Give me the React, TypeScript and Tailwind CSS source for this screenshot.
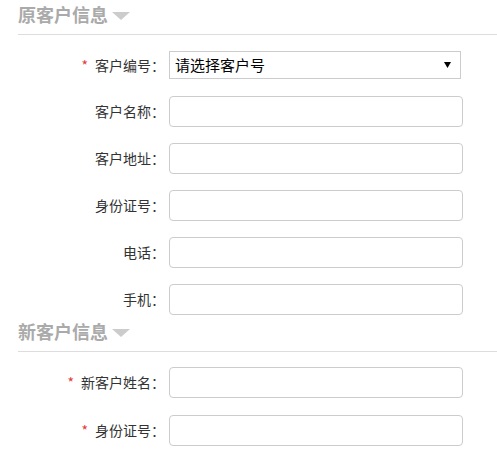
import React from 'react';

type Field = {
  label: string;
  required?: boolean;
};

const oldFields: Field[] = [
  { label: '客户名称：' },
  { label: '客户地址：' },
  { label: '身份证号：' },
  { label: '电话：' },
  { label: '手机：' },
];

const newFields: Field[] = [
  { label: '新客户姓名：', required: true },
  { label: '身份证号：', required: true },
];

const SectionTitle: React.FC<{ title: string; className?: string }> = ({ title, className = '' }) => (
  <div className={`h-[35px] border-b border-[#dddddd] ${className}`}>
    <div className="flex items-center pt-[3px]">
      <span className="text-[18px] leading-[22px] font-bold text-[#aaaaaa]">{title}</span>
      <svg width="18" height="8" viewBox="0 0 18 8" className="ml-[4px] mt-[3px]">
        <path d="M0 0 L18 0 L9 8 Z" fill="#cccccc" />
      </svg>
    </div>
  </div>
);

const Label: React.FC<Field> = ({ label, required }) => (
  <label className="w-[151px] shrink-0 text-right text-[14px] text-[#333333] pr-[4px]">
    {required && <span className="text-[#e4393c] mr-[7px]">*</span>}
    {label}
  </label>
);

const InputRow: React.FC<Field & { className?: string }> = ({ label, required, className = '' }) => (
  <div className={`flex items-center ${className}`}>
    <Label label={label} required={required} />
    <input
      type="text"
      className="w-[294px] h-[31px] border border-[#cccccc] rounded-[4px] px-2 text-[14px] outline-none"
    />
  </div>
);

export default function App() {
  return (
    <div
      className="w-[497px] h-[459px] bg-white pl-[18px] overflow-hidden"
      style={{ fontFamily: '"Noto Sans CJK SC", "Noto Sans", sans-serif' }}
    >
      <SectionTitle title="原客户信息" />

      <div className="flex items-center mt-[16px] mb-[17px]">
        <Label label="客户编号：" required />
        <div className="relative w-[292px] h-[28px] border border-[#cccccc] flex items-center pl-[5px]">
          <span className="text-[15px] text-black">请选择客户号</span>
          <svg width="7" height="6" viewBox="0 0 7 6" className="absolute right-[9px] top-[10px]">
            <path d="M0 0 L7 0 L3.5 6 Z" fill="#000000" />
          </svg>
        </div>
      </div>

      {oldFields.map((f, i) => (
        <InputRow key={f.label} {...f} className={i < oldFields.length - 1 ? 'mb-[16px]' : ''} />
      ))}

      <SectionTitle title="新客户信息" className="mt-[2px]" />

      <div className="mt-[15px]">
        {newFields.map((f) => (
          <InputRow key={f.label} {...f} className="mb-[17px]" />
        ))}
      </div>
    </div>
  );
}
